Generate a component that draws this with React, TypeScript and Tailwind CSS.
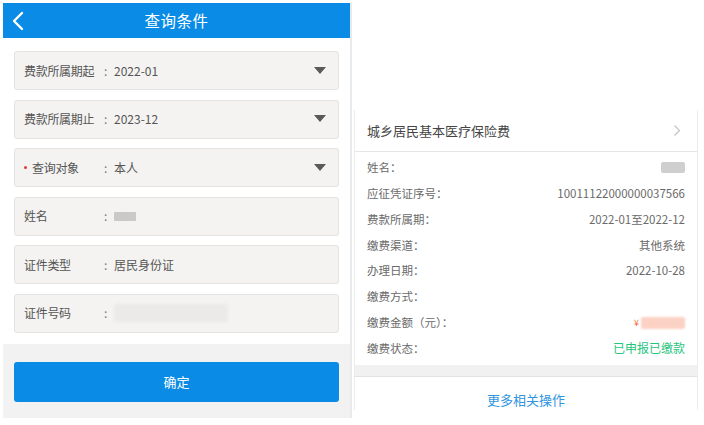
import React from "react";

const font = { fontFamily: '"Noto Sans CJK SC", "Noto Sans", sans-serif' };

function Arrow() {
  return (
    <svg width="12" height="8" viewBox="0 0 12 8" className="mr-[1px]">
      <path d="M0 0 H12 L6 7 Z" fill="#5a5a5a" />
    </svg>
  );
}

function Field({
  label,
  value,
  select,
  required,
  children,
}: {
  label: string;
  value?: string;
  select?: boolean;
  required?: boolean;
  children?: React.ReactNode;
}) {
  return (
    <div className="h-[39px] flex items-center rounded-[3px] border border-[#e4e3e1] bg-[#f4f3f1] pl-[9px] pr-[11px] text-[12px] text-[#555]">
      <div className="w-[80px] flex items-center shrink-0">
        {required && <span className="w-[3px] h-[3px] rounded-full bg-[#e53935] mr-[5px]" />}
        <span className="tracking-[-0.3px]">{label}</span>
      </div>
      <span className="w-[10px] text-[#777]">:</span>
      <div className="flex-1 flex items-center">
        {value && <span className="text-[12px] text-[#555]">{value}</span>}
        {children}
      </div>
      {select && <Arrow />}
    </div>
  );
}

function Row({ label, children }: { label: string; children?: React.ReactNode }) {
  return (
    <div className="h-[25.8px] flex items-center justify-between text-[11.5px] text-[#6a6a6a]">
      <span>{label}</span>
      <div className="flex items-center">{children}</div>
    </div>
  );
}

export default function App() {
  return (
    <div className="w-[704px] h-[425px] bg-white flex overflow-hidden" style={font}>
      <div className="ml-[3px] mt-[3px] w-[349px] h-[415px] flex flex-col border-r-2 border-[#e8eaee]">
        <div className="h-[35px] bg-[#0a8ce6] relative flex items-center justify-center">
          <svg width="14" height="20" viewBox="0 0 14 20" className="absolute left-[8px] top-[8px]">
            <path d="M11 2 L3 10 L11 18" stroke="white" strokeWidth="2.4" fill="none" strokeLinecap="round" strokeLinejoin="round" />
          </svg>
          <span className="text-white text-[15.5px] tracking-[0.5px]">查询条件</span>
        </div>
        <div className="px-[11px] pt-[13px] flex flex-col gap-[9.5px] bg-white pb-[11px]">
          <Field label="费款所属期起" value="2022-01" select />
          <Field label="费款所属期止" value="2023-12" select />
          <Field label="查询对象" value="本人" select required />
          <Field label="姓名">
            <span className="w-[22px] h-[9px] bg-[#c9c9c9] rounded-[1px] blur-[0.5px]" />
          </Field>
          <Field label="证件类型" value="居民身份证" />
          <Field label="证件号码">
            <span className="w-[114px] h-[18px] bg-[#ebeae9] rounded-[3px] blur-[1.5px]" />
          </Field>
        </div>
        <div className="flex-1 bg-[#f2f2f2] px-[11px] pt-[18px]">
          <div className="h-[40px] rounded-[3px] bg-[#0a8ce6] flex items-center justify-center text-white text-[13px]">
            确定
          </div>
        </div>
      </div>
      <div className="ml-[2px] mt-[110px] w-[344px] h-[300px] border-x border-[#ececec] flex flex-col">
        <div className="h-[42px] flex items-center justify-between pl-[12px] pr-[16px] border-b border-[#e6e6e6]">
          <span className="text-[13px] text-[#444]">城乡居民基本医疗保险费</span>
          <svg width="8" height="13" viewBox="0 0 8 13">
            <path d="M1.5 1.5 L6.5 6.5 L1.5 11.5" stroke="#c4c4c4" strokeWidth="1.2" fill="none" />
          </svg>
        </div>
        <div className="pl-[12px] pr-[12px] pt-[3px] pb-[4px]">
          <Row label="姓名：">
            <span className="w-[24px] h-[11px] bg-[#cfcfcf] rounded-[2px] blur-[0.6px]" />
          </Row>
          <Row label="应征凭证序号：">
            <span>10011122000000037566</span>
          </Row>
          <Row label="费款所属期：">
            <span>2022-01至2022-12</span>
          </Row>
          <Row label="缴费渠道：">
            <span>其他系统</span>
          </Row>
          <Row label="办理日期：">
            <span>2022-10-28</span>
          </Row>
          <Row label="缴费方式：" />
          <Row label="缴费金额（元）：">
            <span className="text-[#f36b3c] text-[9px] mr-[2px]">¥</span>
            <span className="w-[44px] h-[12px] bg-[#fbd2c4] rounded-[2px] blur-[0.8px]" />
          </Row>
          <Row label="缴费状态：">
            <span className="text-[#27c57c] text-[12px]">已申报已缴款</span>
          </Row>
        </div>
        <div className="h-[12px] bg-[#f1f1f1] border-b border-[#e3e3e3]" />
        <div className="flex-1 flex flex-col items-center pt-[13px]">
          <span className="text-[13px] text-[#2f95e0]">更多相关操作</span>
        </div>
      </div>
    </div>
  );
}
